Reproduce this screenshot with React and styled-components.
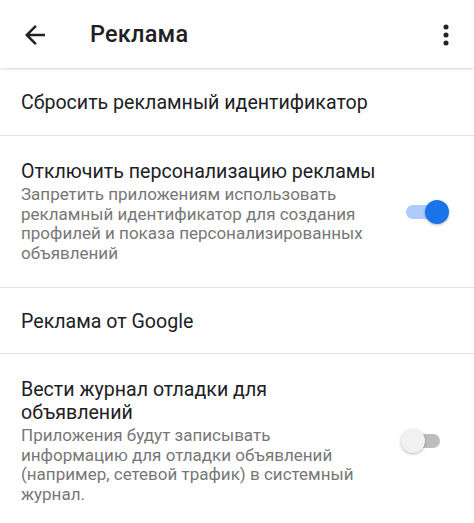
import React from "react";
import styled, { createGlobalStyle } from "styled-components";

const GlobalStyle = createGlobalStyle`
  html, body {
    margin: 0;
    padding: 0;
    background: #ffffff;
  }
  body {
    font-family: Roboto, "Noto Sans", "Liberation Sans", sans-serif;
    -webkit-font-smoothing: antialiased;
  }
`;

const Screen = styled.div`
  width: 474px;
  height: 523px;
  overflow: hidden;
  background: #ffffff;
`;

const Toolbar = styled.header`
  display: flex;
  align-items: center;
  height: 68px;
  box-sizing: border-box;
  padding: 0 12px 0 20px;
  box-shadow: 0 1px 3px rgba(0, 0, 0, 0.16);
  position: relative;
  z-index: 1;
`;

const IconButton = styled.div`
  display: flex;
  align-items: center;
  justify-content: center;
  width: ${(p) => p.size}px;
  height: ${(p) => p.size}px;
  color: #202124;
  margin-top: 2px;
`;

const Title = styled.h1`
  flex: 1;
  margin: 0 0 0 40px;
  font-size: 23.5px;
  font-weight: 500;
  color: #202124;
  letter-spacing: 0.2px;
`;

const List = styled.div`
  display: flex;
  flex-direction: column;
`;

const Item = styled.div`
  display: flex;
  align-items: center;
  box-sizing: border-box;
  min-height: ${(p) => p.minHeight || 0}px;
  padding: ${(p) => (p.tall ? "24px 34px 24px 21px" : "1px 34px 0 21px")};
  border-bottom: ${(p) => (p.last ? "none" : "1.5px solid #e3e3e3")};
`;

const Texts = styled.div`
  flex: 1;
  display: flex;
  flex-direction: column;
  min-width: 0;
`;

const ItemTitle = styled.div`
  font-size: 19.6px;
  line-height: 23px;
  color: #202124;
`;

const Summary = styled.div`
  margin-top: 2px;
  font-size: 17px;
  line-height: 19.5px;
  color: #777777;
`;

const Widget = styled.div`
  flex: none;
  width: 34px;
  margin-left: 25px;
  display: flex;
  align-items: center;
`;

const Track = styled.div`
  position: relative;
  width: 34px;
  height: 14px;
  border-radius: 7px;
  background: ${(p) => (p.checked ? "#aecbfa" : "#bdbdbd")};
`;

const Thumb = styled.div`
  position: absolute;
  top: -5px;
  left: ${(p) => (p.checked ? "19px" : "-5px")};
  width: 24px;
  height: 24px;
  border-radius: 50%;
  background: ${(p) => (p.checked ? "#1a73e8" : "#f1f1f1")};
  box-shadow: 0 1px 3px rgba(0, 0, 0, 0.28);
`;

function Switch({ checked }) {
  return (
    <Widget>
      <Track checked={checked}>
        <Thumb checked={checked} />
      </Track>
    </Widget>
  );
}

function BackIcon() {
  return (
    <svg width="30" height="30" viewBox="0 0 24 24" fill="currentColor">
      <path d="M20 11H7.83l5.59-5.59L12 4l-8 8 8 8 1.41-1.41L7.83 13H20v-2z" />
    </svg>
  );
}

function MoreIcon() {
  return (
    <svg width="32" height="32" viewBox="0 0 24 24" fill="currentColor">
      <circle cx="12" cy="6" r="1.9" />
      <circle cx="12" cy="12" r="1.9" />
      <circle cx="12" cy="18" r="1.9" />
    </svg>
  );
}

export default function App() {
  return (
    <Screen>
      <GlobalStyle />
      <Toolbar>
        <IconButton size={30}>
          <BackIcon />
        </IconButton>
        <Title>Реклама</Title>
        <IconButton size={32}>
          <MoreIcon />
        </IconButton>
      </Toolbar>
      <List>
        <Item minHeight={68}>
          <Texts>
            <ItemTitle>Сбросить рекламный идентификатор</ItemTitle>
          </Texts>
        </Item>
        <Item tall>
          <Texts>
            <ItemTitle>Отключить персонализацию рекламы</ItemTitle>
            <Summary>
              Запретить приложениям использовать рекламный идентификатор для
              создания профилей и показа персонализированных объявлений
            </Summary>
          </Texts>
          <Switch checked />
        </Item>
        <Item minHeight={66}>
          <Texts>
            <ItemTitle>Реклама от Google</ItemTitle>
          </Texts>
        </Item>
        <Item tall last>
          <Texts>
            <ItemTitle>Вести журнал отладки для объявлений</ItemTitle>
            <Summary>
              Приложения будут записывать информацию для отладки объявлений
              (например, сетевой трафик) в системный журнал.
            </Summary>
          </Texts>
          <Switch />
        </Item>
      </List>
    </Screen>
  );
}
